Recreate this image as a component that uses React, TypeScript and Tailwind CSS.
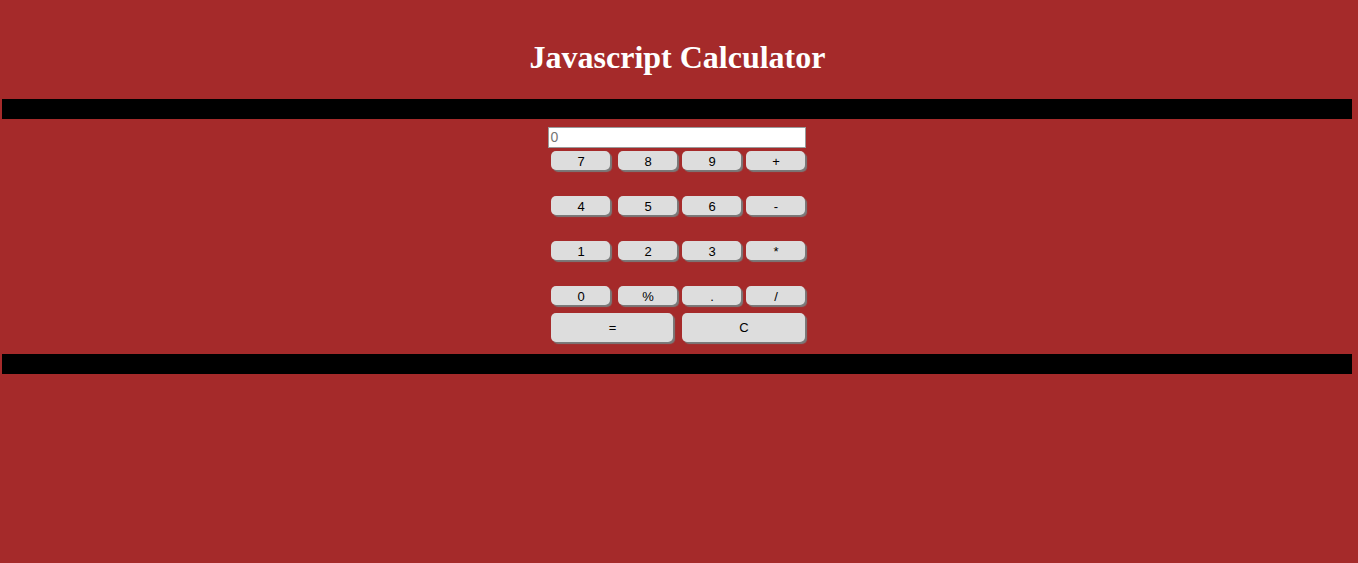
import React from "react";

const btn =
  "h-[19px] rounded-[5px] bg-[#dddddd] text-[13px] leading-[21px] pl-[2px] text-black text-center shadow-[2px_2px_1px_#7a7a7a] [font-family:'Liberation_Sans',Arial,sans-serif]";

function Row({ keys, mt }: { keys: string[]; mt: string }) {
  return (
    <div className={`flex ${mt}`}>
      <button className={`${btn} w-[59px]`}>{keys[0]}</button>
      <button className={`${btn} w-[59px] ml-[8px]`}>{keys[1]}</button>
      <button className={`${btn} w-[59px] ml-[5px]`}>{keys[2]}</button>
      <button className={`${btn} w-[59px] ml-[5px]`}>{keys[3]}</button>
    </div>
  );
}

export default function App() {
  return (
    <div className="min-h-[563px] w-full bg-[#a52a2a] overflow-hidden">
      <div className="pt-[39px] h-[99px] pr-[3px]">
        <h1 className="text-center text-white font-bold text-[32px] leading-[37px] [font-family:'Liberation_Serif','Times_New_Roman',serif]">
          Javascript Calculator
        </h1>
      </div>
      <div className="ml-[2px] w-[1350px] h-[20px] bg-black" />
      <div className="flex justify-center">
        <div className="w-[258px] ml-[-5px] pt-[8px] h-[235px]">
          <div className="w-[258px] h-[21px] bg-white border border-[#9a9a9a] text-[14px] leading-[19px] pl-[2px] text-[#757575] [font-family:'Liberation_Sans',Arial,sans-serif]">
            0
          </div>
          <div className="ml-[3px]">
            <Row keys={["7", "8", "9", "+"]} mt="mt-[3px]" />
            <Row keys={["4", "5", "6", "-"]} mt="mt-[26px]" />
            <Row keys={["1", "2", "3", "*"]} mt="mt-[26px]" />
            <Row keys={["0", "%", ".", "/"]} mt="mt-[26px]" />
            <div className="flex mt-[8px]">
              <button className={`${btn} w-[122px] !h-[29px] !leading-[30px]`}>=</button>
              <button className={`${btn} w-[123px] ml-[9px] !h-[29px] !leading-[30px]`}>C</button>
            </div>
          </div>
        </div>
      </div>
      <div className="ml-[2px] w-[1350px] h-[20px] bg-black" />
    </div>
  );
}
